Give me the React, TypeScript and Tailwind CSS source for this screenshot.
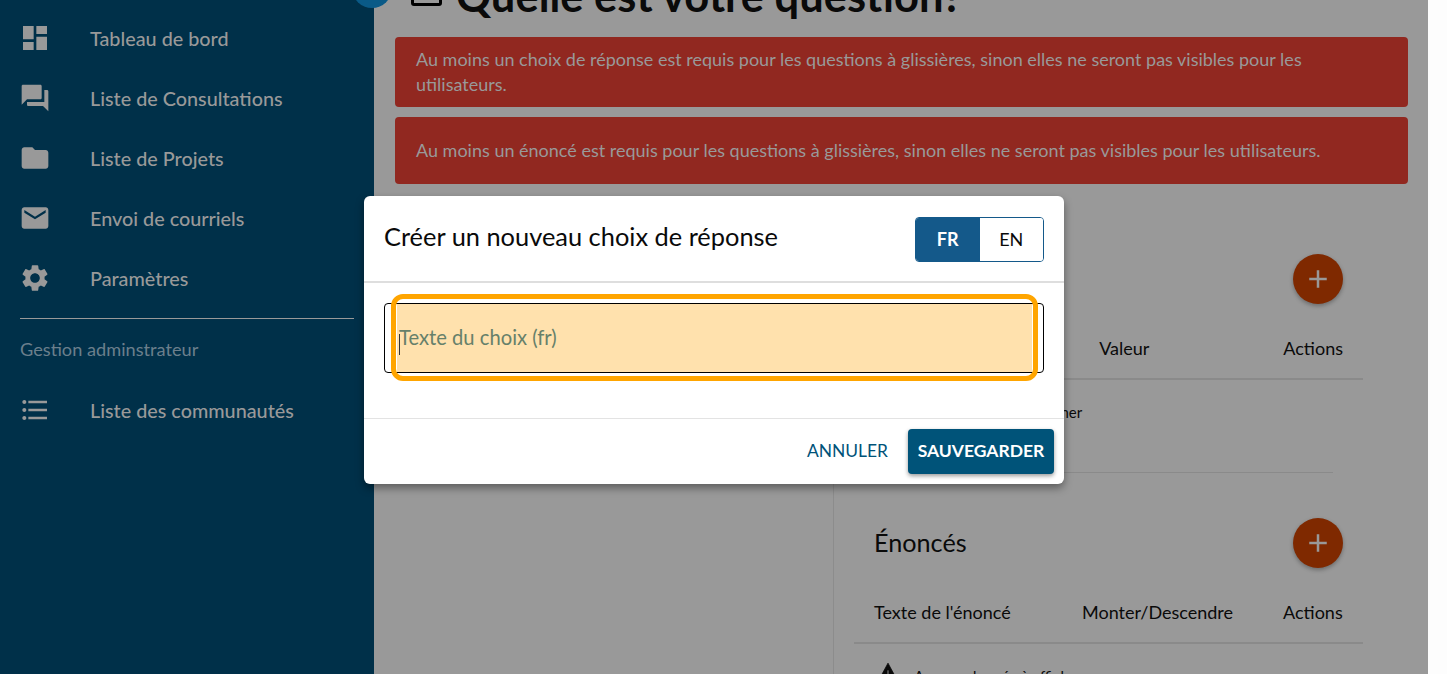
import React from "react";

const font = "font-['Lato','Liberation_Sans',sans-serif]";

const Icon = ({ d }: { d: string }) => (
  <svg viewBox="0 0 24 24" className="w-[32px] h-[32px] shrink-0 fill-[#999999]">
    <path d={d} />
  </svg>
);

const items = [
  ["Tableau de bord", "M3 13h8V3H3v10zm0 8h8v-6H3v6zm10 0h8V11h-8v10zm0-18v6h8V3h-8z"],
  ["Liste de Consultations", "M21 6h-2v9H6v2c0 .55.45 1 1 1h11l4 4V7c0-.55-.45-1-1-1zm-4 6V3c0-.55-.45-1-1-1H3c-.55 0-1 .45-1 1v14l4-4h10c.55 0 1-.45 1-1z"],
  ["Liste de Projets", "M10 4H4c-1.1 0-1.99.9-1.99 2L2 18c0 1.1.9 2 2 2h16c1.1 0 2-.9 2-2V8c0-1.1-.9-2-2-2h-8l-2-2z"],
  ["Envoi de courriels", "M20 4H4c-1.1 0-1.99.9-1.99 2L2 18c0 1.1.9 2 2 2h16c1.1 0 2-.9 2-2V6c0-1.1-.9-2-2-2zm0 4l-8 5-8-5V6l8 5 8-5v2z"],
  ["Paramètres", "M19.14 12.94c.04-.3.06-.61.06-.94 0-.32-.02-.64-.07-.94l2.03-1.58c.18-.14.23-.41.12-.61l-1.92-3.32c-.12-.22-.37-.29-.59-.22l-2.39.96c-.5-.38-1.03-.7-1.62-.94l-.36-2.54c-.04-.24-.24-.41-.48-.41h-3.84c-.24 0-.43.17-.47.41l-.36 2.54c-.59.24-1.13.57-1.62.94l-2.39-.96c-.22-.08-.47 0-.59.22L2.74 8.87c-.12.21-.08.47.12.61l2.03 1.58c-.05.3-.09.63-.09.94s.02.64.07.94l-2.03 1.58c-.18.14-.23.41-.12.61l1.92 3.32c.12.22.37.29.59.22l2.39-.96c.5.38 1.03.7 1.62.94l.36 2.54c.05.24.24.41.48.41h3.84c.24 0 .44-.17.47-.41l.36-2.54c.59-.24 1.13-.56 1.62-.94l2.39.96c.22.08.47 0 .59-.22l1.92-3.32c.12-.22.07-.47-.12-.61l-2.01-1.58zM12 15.6c-1.98 0-3.6-1.62-3.6-3.6s1.62-3.6 3.6-3.6 3.6 1.62 3.6 3.6-1.62 3.6-3.6 3.6z"],
];

const NavRow = ({ label, d }: { label: string; d: string }) => (
  <div className="flex items-center h-[60px] pl-[19px]">
    <Icon d={d} />
    <span className="ml-[39px] mt-[2px] text-[19.8px] text-[#999999] font-medium">{label}</span>
  </div>
);

const Fab = () => (
  <div className="w-[50px] h-[50px] rounded-full bg-[#7f2900] flex items-center justify-center shadow-[0_2px_4px_rgba(0,0,0,0.3)]">
    <svg viewBox="0 0 24 24" className="w-[30px] h-[30px] fill-[#999999]">
      <path d="M19 13h-6v6h-2v-6H5v-2h6V5h2v6h6v2z" />
    </svg>
  </div>
);

const NoData = () => (
  <div className="flex items-start h-[20px] mt-[22px] -ml-[1px] text-[15px] leading-[20px]">
    <svg viewBox="0 0 24 24" className="w-[30px] h-[30px] shrink-0 fill-[#0a0a0a] -mt-[6px]">
      <path fillRule="evenodd" stroke="#0a0a0a" strokeWidth="0.6" strokeLinejoin="round" d="M12 2.5 2 21h20L12 2.5zm.7 15.5h-1.4v-1.6h1.4V18zm0-3.2h-1.4V8h1.4v6.8z" />
    </svg>
    <span className="ml-[11px]">Aucune donnée à afficher</span>
  </div>
);

export default function App() {
  return (
    <div className={`${font} relative w-[1447px] h-[674px] overflow-hidden bg-white flex`}>
      <aside className="w-[374px] h-full shrink-0 bg-[#003049]">
        <div className="pt-[8px]">
          {items.map(([l, d]) => (
            <NavRow key={l} label={l} d={d} />
          ))}
        </div>
        <div className="mx-5 mt-[10px] h-px bg-[#999999]" />
        <div className="pl-5 mt-[20px] text-[18.2px] leading-[20px] text-[#6b7f8c]">Gestion adminstrateur</div>
        <div className="mt-[21px]">
          <NavRow
            label="Liste des communautés"
            d="M4 10.5c-.83 0-1.5.67-1.5 1.5s.67 1.5 1.5 1.5 1.5-.67 1.5-1.5-.67-1.5-1.5-1.5zm0-6c-.83 0-1.5.67-1.5 1.5S3.17 7.5 4 7.5 5.5 6.83 5.5 6 4.83 4.5 4 4.5zm0 12c-.83 0-1.5.68-1.5 1.5s.68 1.5 1.5 1.5 1.5-.68 1.5-1.5-.67-1.5-1.5-1.5zM7 19h14v-2H7v2zm0-6h14v-2H7v2zm0-8v2h14V5H7z"
          />
        </div>
      </aside>

      <main className="w-[1054px] shrink-0 h-full bg-[#999999] relative">
        <div className="h-[37px] overflow-hidden pl-[37px]">
          <div className="flex items-start -mt-[29px] h-[48px]">
            <span className="w-[31px] h-[35px] shrink-0 border-[3px] border-black rounded-[3px]" />
            <span className="ml-[14px] text-[43.5px] leading-[48px] font-bold text-[#0a0a0a] whitespace-nowrap">Quelle est votre question?</span>
          </div>
        </div>
        <div className="pl-[21px] pr-[20px] flex flex-col gap-[10px]">
          <div className="h-[70px] rounded-[4px] bg-[#912820] px-[21px] py-[10px] text-[18px] leading-[25px] text-[#999999]">
            Au moins un choix de réponse est requis pour les questions à glissières, sinon elles ne seront pas visibles pour les utilisateurs.
          </div>
          <div className="h-[67px] rounded-[4px] bg-[#912820] px-[21px] flex items-center text-[18px] text-[#999999]">
            Au moins un énoncé est requis pour les questions à glissières, sinon elles ne seront pas visibles pour les utilisateurs.
          </div>
        </div>

        <div className="absolute left-[459px] top-[400px] bottom-0 w-px bg-[#8c8c8c]" />

        <div className="absolute left-[480px] top-[254px] w-[509px] px-5 text-[18px] text-[#0a0a0a]">
          <div className="flex justify-end">
            <Fab />
          </div>
          <div className="flex justify-end items-center h-[40px] mt-[24px] gap-[134px]">
            <span>Valeur</span>
            <span>Actions</span>
          </div>
          <div className="h-[2px] bg-[#8a8a8a] -mx-5 mt-[10px]" />
          <NoData />
          <div className="h-px bg-[#8a8a8a] w-[479px] -ml-5 mt-[50px]" />
          <div className="flex items-center justify-between mt-[45px]">
            <span className="text-[25.2px]">Énoncés</span>
            <Fab />
          </div>
          <div className="flex items-center h-[40px] mt-[24px]">
            <span className="w-[208px]">Texte de l'énoncé</span>
            <span className="w-[201px]">Monter/Descendre</span>
            <span>Actions</span>
          </div>
          <div className="h-[2px] bg-[#8a8a8a] -mx-5 mt-[10px]" />
          <NoData />
        </div>

        <div className="absolute -left-[22px] -top-[32px] w-[40px] h-[40px] rounded-full bg-[#0a5a87]" />
      </main>
      <div className="w-[19px] h-full bg-[#fdfdfd]" />

      <div className="absolute left-[364px] top-[196px] w-[700px] h-[288px] bg-white rounded-[6px] shadow-[0_4px_8px_rgba(0,0,0,0.4)] flex flex-col">
        <div className="h-[87px] shrink-0 border-b-2 border-[#dedede] flex items-center justify-between px-5">
          <span className="text-[25.4px] text-[#0a0a0a] -mt-[4px]">Créer un nouveau choix de réponse</span>
          <div className="flex w-[129px] h-[45px] rounded-[4px] border border-[#14598a] overflow-hidden text-[18px] mt-[2px]">
            <div className="flex-1 bg-[#14598a] text-white font-bold flex items-center justify-center">FR</div>
            <div className="flex-1 bg-white text-[#0a0a0a] flex items-center justify-center">EN</div>
          </div>
        </div>
        <div className="h-[136px] shrink-0 px-5 pt-[20px] border-b border-[#e3e3e3]">
          <div className="relative h-[70px] rounded-[4px] border border-black bg-white">
            <div className="absolute inset-y-0 left-[12px] right-[11px] bg-[#ffe1ad] flex items-center pl-[2px] pb-[2px] text-[20.2px] text-[#66806a]">
              Texte du choix (fr)
              <span className="absolute left-[2px] top-[30px] w-px h-[21px] bg-[#333333]" />
            </div>
            <div className="absolute -top-[10px] -bottom-[9px] left-[6px] right-[5px] rounded-[12px] border-[5px] border-[#ffa500]" />
          </div>
        </div>
        <div className="flex-1 flex items-center justify-end pr-[10px] gap-5">
          <span className="text-[17.4px] text-[#005379]">ANNULER</span>
          <div className="w-[146px] h-[45px] rounded-[4px] bg-[#005379] text-white font-bold text-[17.5px] flex items-center justify-center shadow-[0_2px_4px_rgba(0,0,0,0.4)]">
            SAUVEGARDER
          </div>
        </div>
      </div>
    </div>
  );
}
